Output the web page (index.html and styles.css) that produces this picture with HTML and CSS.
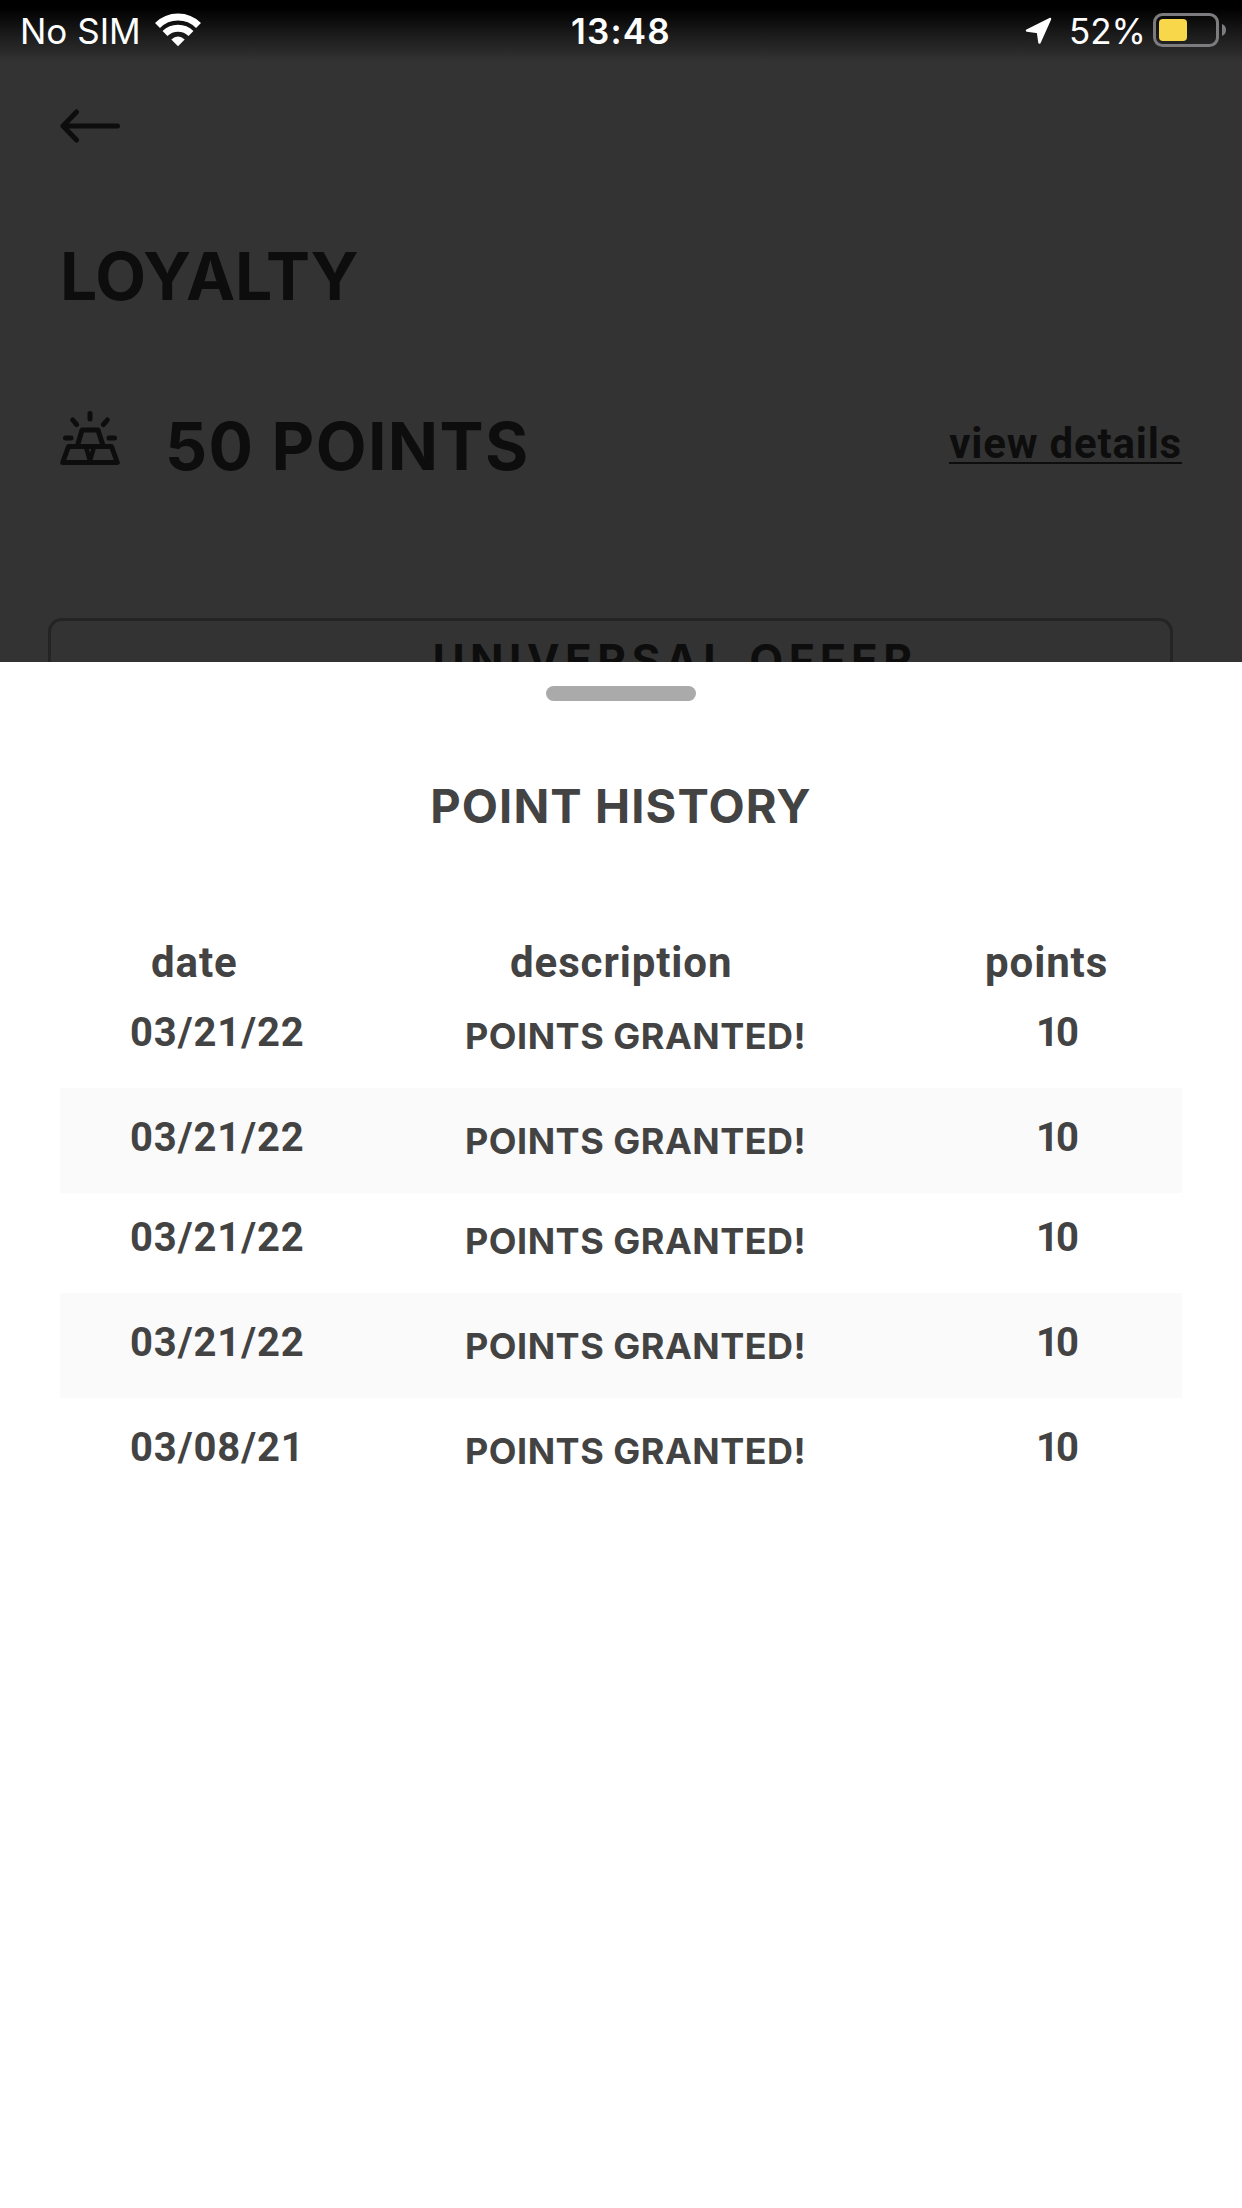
FILE: index.html
```html
<!DOCTYPE html>
<html lang="en">
<head>
  <meta charset="UTF-8" />
  <meta name="viewport" content="width=device-width, initial-scale=1.0"/>
  <title>Loyalty</title>
  <link rel="stylesheet" href="styles.css">
</head>
<body>

  <div class="page">
    <div class="status-bar">
      <div class="status-left">
        <span class="carrier">No SIM</span>
        <svg class="wifi" width="46" height="34" viewBox="0 0 46 34">
          <path d="M2.5 12.5A29 29 0 0 1 43.500 12.500" fill="none" stroke="#fff" stroke-width="7"/>
          <path d="M10 20.500A18.500 18.500 0 0 1 36 20.500" fill="none" stroke="#fff" stroke-width="7"/>
          <path d="M23 33.300L16.300 26.400Q23 20.800 29.700 26.400Z" fill="#fff"/>
        </svg>
      </div>
      <span class="time">13:48</span>
      <div class="status-right">
        <svg class="location" width="27" height="28" viewBox="0 0 27 28">
          <path d="M25 2L2 13.500L13 15L14.500 25.500Z" fill="#fff" stroke="#fff" stroke-width="2.500" stroke-linejoin="round"/>
        </svg>
        <span class="percent">52%</span>
        <svg class="battery" width="74" height="34" viewBox="0 0 74 34">
          <rect x="1.500" y="1.500" width="63" height="31" rx="8" fill="none" stroke="#7c7c7e" stroke-width="3"/>
          <rect x="6" y="6" width="28" height="22" rx="4" fill="#f8d84a"/>
          <path d="M69 11Q73 12.500 73 17T69 23Z" fill="#7c7c7e"/>
        </svg>
      </div>
    </div>

    <svg class="back" width="60" height="34" viewBox="0 0 60 34">
      <path d="M57.500 17H3M16.500 3L3 17L16.500 31" fill="none" stroke="#0d0d0d" stroke-width="5" stroke-linecap="round" stroke-linejoin="round"/>
    </svg>

    <h1>LOYALTY</h1>

    <div class="points-row">
      <svg class="gold" width="60" height="56" viewBox="0 0 60 56">
        <g fill="none" stroke="#0d0d0d" stroke-width="5" stroke-linecap="round" stroke-linejoin="round">
          <path d="M30 3.500V9M12.700 10L16.700 14.700M47.300 10L43.300 14.700M5.500 28H11M49 28H54.500"/>
          <path d="M17.500 35.500L22 20H38L43 35.500"/>
          <path d="M8.500 36.500H51.500L57.300 52.500H2.700Z"/>
          <path d="M26 37L30 51L34 37" stroke-width="4.500"/>
        </g>
      </svg>
      <span class="points-total">50 POINTS</span>
      <a class="details">view details</a>
    </div>

    <div class="offer-card">UNIVERSAL OFFER</div>
  </div>

  <div class="sheet">
    <div class="handle"></div>
    <h2>POINT HISTORY</h2>
    <div class="history">
      <div class="head">
        <span class="h-date">date</span>
        <span class="h-desc">description</span>
        <span class="h-points">points</span>
      </div>
      <div class="row">
        <span class="date">03/21/22</span>
        <span class="desc">POINTS GRANTED!</span>
        <span class="num">10</span>
      </div>
      <div class="row shaded">
        <span class="date">03/21/22</span>
        <span class="desc">POINTS GRANTED!</span>
        <span class="num">10</span>
      </div>
      <div class="row short">
        <span class="date">03/21/22</span>
        <span class="desc">POINTS GRANTED!</span>
        <span class="num">10</span>
      </div>
      <div class="row shaded">
        <span class="date">03/21/22</span>
        <span class="desc">POINTS GRANTED!</span>
        <span class="num">10</span>
      </div>
      <div class="row">
        <span class="date">03/08/21</span>
        <span class="desc">POINTS GRANTED!</span>
        <span class="num">10</span>
      </div>
    </div>
  </div>

</body>
</html>
```
FILE: styles.css
```css
* {
  box-sizing: border-box;
}

body {
  margin: 0;
  width: 1242px;
  height: 2208px;
  overflow: hidden;
  background: #fff;
  font-family: 'Inter', sans-serif;
  font-weight: 700;
  color: #434343;
}

svg {
  display: block;
  flex: none;
}

span, a {
  white-space: nowrap;
}

.page {
  height: 662px;
  overflow: hidden;
  background: linear-gradient(#000 8px, #1a1a1a 34px, #333 62px);
  color: #0d0d0d;
}

.status-bar {
  display: grid;
  grid-template-columns: 1fr 100px 1fr;
  height: 64px;
  color: #fff;
  font-size: 35px;
  line-height: 62px;
  font-weight: 400;
}

.status-left,
.status-right {
  display: flex;
}

.status-left {
  padding-left: 20px;
}

.carrier {
  width: 135px;
}

.wifi,
.battery {
  margin-top: 13px;
}

.time {
  font-weight: 600;
  letter-spacing: 1.2px;
  text-align: center;
}

.status-right {
  justify-content: flex-end;
  padding-right: 15px;
}

.location {
  margin: 17px 17px 0 0;
}

.percent {
  width: 84px;
}

.back {
  margin: 45px 0 0 60px;
}

h1 {
  margin: 93px 0 0 60px;
  font-size: 66px;
  line-height: 80px;
  letter-spacing: -0.2px;
}

.points-row {
  display: flex;
  height: 80px;
  margin: 90px 60px 0;
  line-height: 80px;
}

.gold {
  margin: 4px 45px 0 0;
}

.points-total {
  font-size: 66px;
  letter-spacing: 1.4px;
}

.details {
  height: 58px;
  margin-left: auto;
  border-bottom: 2px solid #0d0d0d;
  font-family: 'Roboto', sans-serif;
  font-size: 42px;
  line-height: 75px;
  letter-spacing: 0.8px;
}

.offer-card {
  width: 1125px;
  height: 200px;
  margin: 132px 0 0 48px;
  padding: 14px 0 0 129px;
  border: 3px solid #242424;
  border-radius: 14px;
  text-align: center;
  font-size: 44px;
  line-height: 50px;
  letter-spacing: 5.4px;
}

.sheet {
  padding: 24px 60px 0;
}

.handle {
  width: 150px;
  height: 15px;
  margin: 0 auto;
  border-radius: 8px;
  background: #aaa;
}

h2 {
  margin: 75px 0 0;
  text-align: center;
  font-size: 47px;
  line-height: 60px;
  letter-spacing: 1.1px;
}

.history {
  margin-top: 97px;
}

.head,
.row {
  display: grid;
  grid-template-columns: 405px 575px 1fr;
}

.head {
  height: 50px;
  font-family: 'Roboto', sans-serif;
  font-size: 42px;
  line-height: 60px;
  letter-spacing: 0.9px;
}

.h-date {
  padding-left: 91px;
}

.h-desc {
  padding-left: 45px;
}

.h-points {
  margin-left: -55px;
}

.row {
  height: 105px;
  padding-top: 25px;
  line-height: 50px;
}

.row.short {
  height: 100px;
  padding-top: 20px;
}

.shaded {
  background: #fafafa;
}

.date,
.num {
  font-family: 'Roboto', sans-serif;
  font-size: 40px;
}

.date {
  padding-left: 70px;
  letter-spacing: 0.9px;
}

.desc {
  padding-top: 3px;
  font-size: 36px;
  letter-spacing: 0.5px;
}

.num {
  margin-left: -4px;
  letter-spacing: -3px;
}
```
